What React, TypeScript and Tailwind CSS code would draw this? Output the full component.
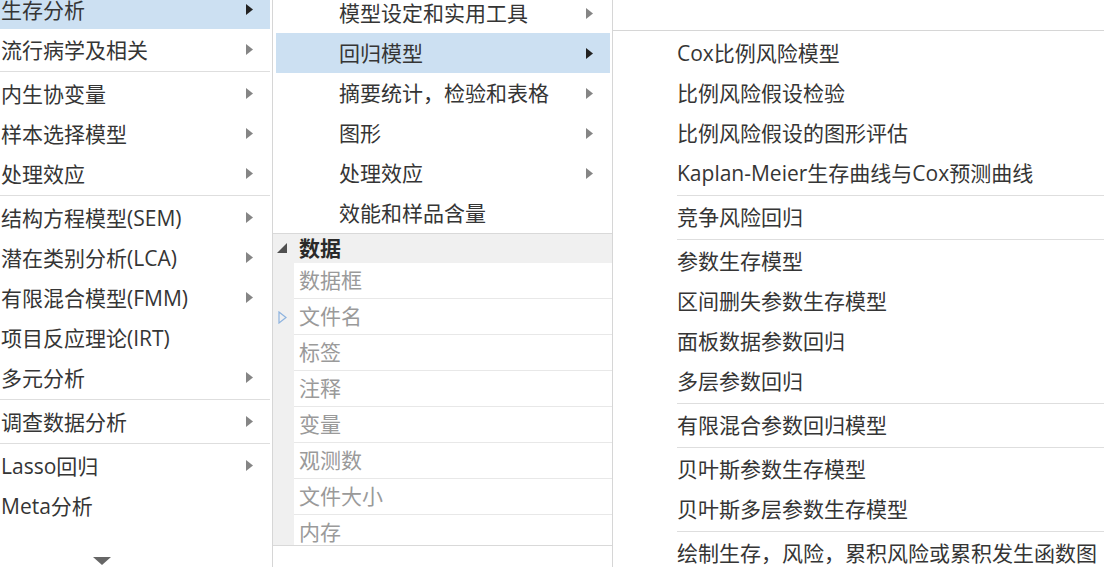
import React from 'react';

type Item = { label: string; arrow?: boolean; active?: boolean } | 'sep';

const leftItems: Item[] = [
  { label: '生存分析', arrow: true, active: true },
  { label: '流行病学及相关', arrow: true },
  'sep',
  { label: '内生协变量', arrow: true },
  { label: '样本选择模型', arrow: true },
  { label: '处理效应', arrow: true },
  'sep',
  { label: '结构方程模型(SEM)', arrow: true },
  { label: '潜在类别分析(LCA)', arrow: true },
  { label: '有限混合模型(FMM)', arrow: true },
  { label: '项目反应理论(IRT)' },
  { label: '多元分析', arrow: true },
  'sep',
  { label: '调查数据分析', arrow: true },
  'sep',
  { label: 'Lasso回归', arrow: true },
  { label: 'Meta分析' },
];

const middleItems: Item[] = [
  { label: '模型设定和实用工具', arrow: true },
  { label: '回归模型', arrow: true, active: true },
  { label: '摘要统计，检验和表格', arrow: true },
  { label: '图形', arrow: true },
  { label: '处理效应', arrow: true },
  { label: '效能和样品含量' },
];

const rightItems: Item[] = [
  { label: 'Cox比例风险模型' },
  { label: '比例风险假设检验' },
  { label: '比例风险假设的图形评估' },
  { label: 'Kaplan-Meier生存曲线与Cox预测曲线' },
  'sep',
  { label: '竞争风险回归' },
  'sep',
  { label: '参数生存模型' },
  { label: '区间删失参数生存模型' },
  { label: '面板数据参数回归' },
  { label: '多层参数回归' },
  'sep',
  { label: '有限混合参数回归模型' },
  'sep',
  { label: '贝叶斯参数生存模型' },
  { label: '贝叶斯多层参数生存模型' },
  'sep',
  { label: '绘制生存，风险，累积风险或累积发生函数图' },
];

const dataRows = ['数据框', '文件名', '标签', '注释', '变量', '观测数', '文件大小', '内存'];

function Arrow({ dark }: { dark?: boolean }) {
  return (
    <svg width="7" height="11" viewBox="0 0 7 11" className="shrink-0">
      <polygon points="0,0 7,5.5 0,11" fill={dark ? '#222222' : '#858585'} />
    </svg>
  );
}

function Separator({ indent }: { indent: string }) {
  return (
    <div className={`h-1 flex items-center ${indent}`}>
      <div className="h-px w-full bg-[#dedede]" />
    </div>
  );
}

export default function App() {
  return (
    <div className="w-[1104px] h-[567px] overflow-hidden bg-white text-[21px] text-[#353535] font-['Open_Sans','Noto_Sans_CJK_SC',sans-serif] flex">
      {/* Left menu */}
      <div className="w-[273px] shrink-0 border-r border-[#d6d6d6] overflow-hidden">
        <div className="-mt-[11px] mr-[2px]">
          {leftItems.map((item, i) =>
            item === 'sep' ? (
              <Separator key={i} indent="" />
            ) : (
              <div
                key={i}
                className={`h-10 flex items-center pl-[1px] pr-[17px] ${item.active ? 'bg-[#cce0f2]' : ''}`}
              >
                <span className="flex-1 leading-none whitespace-nowrap pt-[3px]">{item.label}</span>
                {item.arrow && <Arrow dark={item.active} />}
              </div>
            )
          )}
          <div className="mt-[32px] pl-[93px]">
            <svg width="18" height="8" viewBox="0 0 18 8">
              <polygon points="0,0 18,0 9,8" fill="#666666" />
            </svg>
          </div>
        </div>
      </div>

      {/* Middle menu + data panel */}
      <div className="w-[340px] shrink-0 border-r border-[#d6d6d6] overflow-hidden flex flex-col">
        <div className="-mt-[7px]">
          {middleItems.map((item, i) =>
            item === 'sep' ? null : (
              <div
                key={i}
                className={`h-10 flex items-center ml-[3px] mr-[2px] pl-[63px] pr-[17px] ${item.active ? 'bg-[#cce0f2]' : ''}`}
              >
                <span className="flex-1 leading-none whitespace-nowrap">{item.label}</span>
                {item.arrow && <Arrow dark={item.active} />}
              </div>
            )
          )}
        </div>
        <div className="border-t border-b border-[#d9d9d9]">
          <div className="h-[29px] bg-[#f0f0f0] flex items-center">
            <svg width="10" height="10" viewBox="0 0 10 10" className="ml-[4px] mb-[2px]">
              <polygon points="10,0 10,10 0,10" fill="#505050" />
            </svg>
            <span className="ml-[12px] leading-none font-bold text-[#2a2a2a]">数据</span>
          </div>
          <div className="h-[282px] overflow-hidden flex">
            <div className="w-[21px] shrink-0 bg-[#f0f0f0] flex flex-col">
              {dataRows.map((r, i) => (
                <div key={r} className="h-9 shrink-0 flex items-center justify-center">
                  {i === 1 && (
                    <svg width="9" height="13" viewBox="0 0 9 13" className="-ml-[2px]">
                      <polygon points="1,1 8,6.5 1,12" fill="none" stroke="#8db3df" strokeWidth="1.2" />
                    </svg>
                  )}
                </div>
              ))}
            </div>
            <div className="flex-1">
              {dataRows.map((r) => (
                <div key={r} className="h-9 flex items-center border-b border-[#e8e8e8] pl-[5px] text-[#9a9a9a]">
                  <span className="leading-none">{r}</span>
                </div>
              ))}
            </div>
          </div>
        </div>
      </div>

      {/* Right submenu */}
      <div className="flex-1 overflow-hidden">
        <div className="h-[30px]" />
        <div className="border-t border-[#d6d6d6] pt-[2px]">
          {rightItems.map((item, i) =>
            item === 'sep' ? (
              <Separator key={i} indent="ml-[64px]" />
            ) : (
              <div key={i} className="h-10 flex items-center pl-[64px]">
                <span className="leading-none whitespace-nowrap">{item.label}</span>
              </div>
            )
          )}
        </div>
      </div>
    </div>
  );
}
